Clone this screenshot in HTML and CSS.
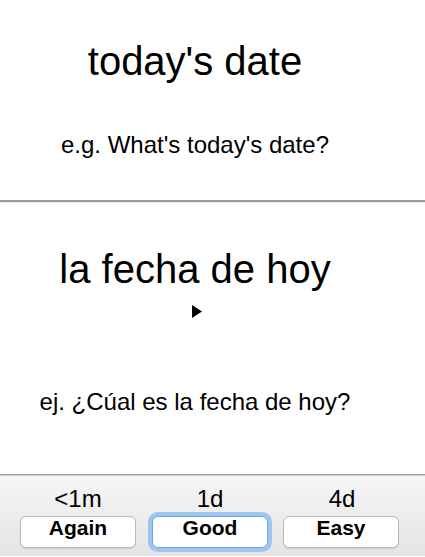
FILE: index.html
```html
<!DOCTYPE html>
<html>
<head>
<meta charset="utf-8">
<link rel="stylesheet" href="styles.css">
</head>
<body>
<div class="card">
  <div class="q-title">today's date</div>
  <div class="q-ex">e.g. What's today's date?</div>
  <hr class="sep">
  <div class="a-title">la fecha de hoy</div>
  <div class="play"><svg class="play-icon" width="10" height="13" viewBox="0 0 10 13"><path d="M0 0 L10 6.5 L0 13 Z" fill="#000"/></svg></div>
  <div class="a-ex">ej. ¿Cúal es la fecha de hoy?</div>
</div>
<div class="bar">
  <div class="row labels">
    <span class="cell">&lt;1m</span>
    <span class="cell">1d</span>
    <span class="cell">4d</span>
  </div>
  <div class="row buttons">
    <button class="btn">Again</button>
    <button class="btn focus">Good</button>
    <button class="btn">Easy</button>
  </div>
</div>
</body>
</html>
```
FILE: styles.css
```css
html, body {
  margin: 0;
  padding: 0;
  background: #fff;
  font-family: "Liberation Sans", Arial, sans-serif;
  color: #000;
}
.card {
  height: 474px;
  overflow: hidden;
}
.q-title, .q-ex, .a-title, .a-ex, .play {
  width: 390px;
  text-align: center;
}
.q-title {
  margin-top: 38px;
  font-size: 40px;
  line-height: 46px;
}
.q-ex {
  margin-top: 47px;
  font-size: 24px;
  line-height: 28px;
}
.sep {
  margin: 41px 0 0;
  height: 0;
  border: 0;
  border-top: 2px solid #999;
  border-bottom: 1px solid #ebebeb;
}
.a-title {
  margin-top: 43px;
  font-size: 40px;
  line-height: 46px;
}
.play {
  margin-top: 13px;
  height: 14px;
  line-height: 0;
}
.play-icon {
  margin-left: 4px;
}
.a-ex {
  margin-top: 69px;
  font-size: 24px;
  line-height: 28px;
}
.bar {
  height: 81px;
  border-top: 1px solid #9e9e9e;
  box-shadow: inset 0 1px 0 #cfcfcf;
  background: linear-gradient(#f6f6f6, #e4e4e4);
}
.row {
  display: flex;
  padding-left: 20px;
  gap: 16px;
}
.labels {
  padding-top: 10px;
}
.cell {
  width: 116px;
  text-align: center;
  font-size: 24px;
  line-height: 28px;
}
.buttons {
  margin-top: 3px;
}
.btn {
  width: 116px;
  height: 32px;
  box-sizing: border-box;
  margin: 0;
  padding: 0 0 8px;
  border: 1px solid #b9b9b9;
  border-radius: 6px;
  background: #fff;
  box-shadow: 0 1px 1px rgba(0,0,0,0.12);
  font-family: "Liberation Sans", Arial, sans-serif;
  font-weight: bold;
  font-size: 21px;
  line-height: 22px;
  color: #000;
}
.btn.focus {
  border-color: #6ea3e0;
  box-shadow: 0 0 0 4px #9cc5f0;
}
.btn + .btn.focus + .btn {
  margin-left: -1px;
}
```
